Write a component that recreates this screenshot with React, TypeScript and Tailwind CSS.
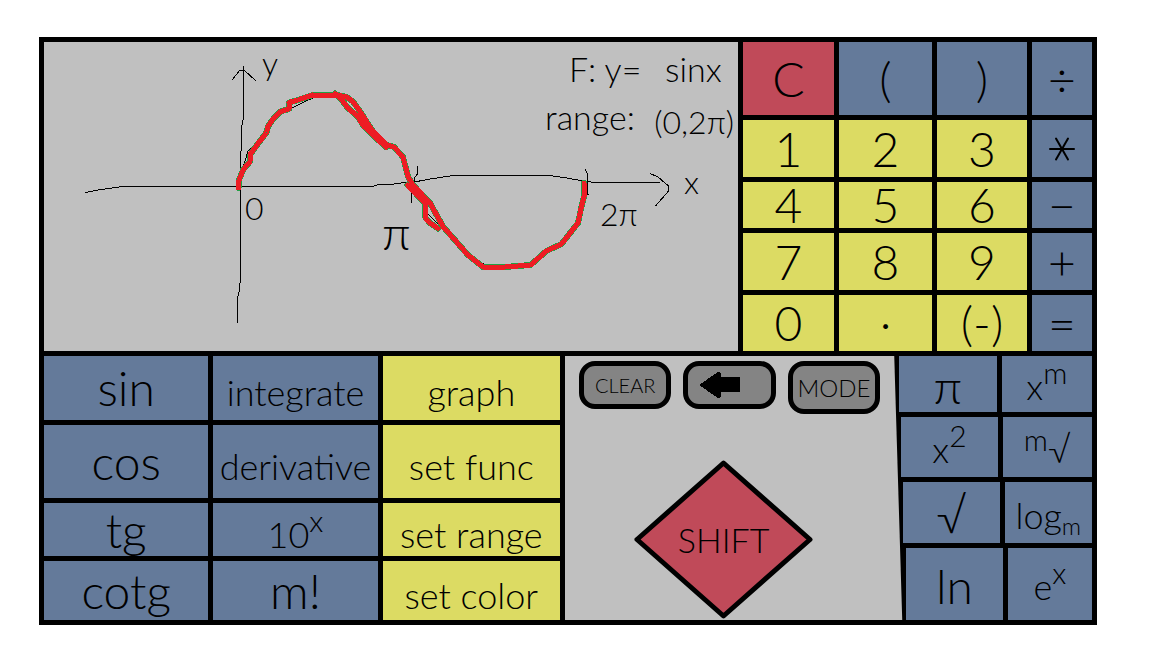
import React from "react";
import clsx from "clsx";
import { Asterisk } from "lucide-react";

type Tone = "blue" | "yellow" | "red";

const tones: Record<Tone, string> = {
  blue: "bg-[#647a9a]",
  yellow: "bg-[#dcdb63]",
  red: "bg-[#c04a59]",
};

function Key({
  tone,
  className,
  children,
}: {
  tone: Tone;
  className?: string;
  children: React.ReactNode;
}) {
  return (
    <button
      type="button"
      className={clsx(
        "flex min-h-0 min-w-0 items-center justify-center whitespace-nowrap leading-none",
        tones[tone],
        className,
      )}
    >
      <span>{children}</span>
    </button>
  );
}

const Sup = ({ children }: { children: React.ReactNode }) => (
  <sup className="-top-4 text-3xl leading-none">{children}</sup>
);

const keypad: [string, Tone][] = [
  ["C", "red"], ["(", "blue"], [")", "blue"], ["÷", "blue"],
  ["1", "yellow"], ["2", "yellow"], ["3", "yellow"], ["*", "blue"],
  ["4", "yellow"], ["5", "yellow"], ["6", "yellow"], ["−", "blue"],
  ["7", "yellow"], ["8", "yellow"], ["9", "yellow"], ["+", "blue"],
  ["0", "yellow"], ["·", "yellow"], ["(-)", "yellow"], ["=", "blue"],
];

const functions: [React.ReactNode, Tone][] = [
  ["sin", "blue"], ["integrate", "blue"], ["graph", "yellow"],
  ["cos", "blue"], ["derivative", "blue"], ["set func", "yellow"],
  ["tg", "blue"], [<>10<Sup>x</Sup></>, "blue"], ["set range", "yellow"],
  ["cotg", "blue"], ["m!", "blue"], ["set color", "yellow"],
];

const powers: { row: string; keys: React.ReactNode[] }[] = [
  { row: "pl-[5px] grid-cols-[97fr_90fr]", keys: ["π", <>x<Sup>m</Sup></>] },
  { row: "pl-[7px] grid-cols-[96fr_89fr]", keys: [<>x<Sup>2</Sup></>, <><sup className="-top-3 text-3xl leading-none">m</sup>√</>] },
  { row: "pl-[9px] grid-cols-[96fr_87fr]", keys: ["√", <>log<sub className="text-2xl leading-none">m</sub></>] },
  { row: "pl-[12px] grid-cols-[96fr_84fr]", keys: ["ln", <>e<Sup>x</Sup></>] },
];

const sine =
  "M238.5 188V181.5L243 170L250 161.5L250.5 154L257 145L266.5 132.5L268 126.5L273.5 118.5L280.5 111.5L289 109V102.5L298 100L312.5 95L340 95.5L346.5 97L353 101.5L360 111.5L366.5 121.5L373 131.5L386.5 145L394 147L403 157L408 176.5L413 185L430 203L443 226.5L468 255L483 267H505L530.5 265L546.5 251L561.5 244L578 223L581.5 206.5L584 196.5V183";
const retraced =
  "M335 93.5L341.5 99.5L347 107L358 117L364 126.5L376.5 138.5L386 147M407.5 185L425 203L425.5 218L430 223L438 228.5";

function Graph() {
  return (
    <svg
      viewBox="44 42 694 309"
      className="h-full w-full"
      role="img"
      aria-label="Graph of y = sin x"
      fill="none"
      strokeLinejoin="round"
      strokeLinecap="round"
    >
      <g stroke="#000" strokeWidth="1" shapeRendering="crispEdges">
        <path d="M243.5 66V118L241.5 127V150L240.5 152V277L239.5 290L237.5 298V323" />
        <path d="M232 80L240 70H244L256 81" />
        <path d="M86 192.5L98 190L123 186.5H373L378 184.5H390L405 182.5L417 181.5L430 179L450 176L462 175.5H550L567 178L583 181L595 182.5H660" />
        <path d="M650 173.5L658 177L668.5 186V191L656 205.5" />
        <path d="M417.5 166V174L414.5 178V187L411.5 190V203" />
        <path d="M585.5 170L587.5 174V194.5H589M581.5 185V197" />
        <path d="M243 168L248 151L257 142L270 127L280 115L292 108L308 100L318 96M366 121L374 129L379 134M426 212L440 226L444 230M472 256L485 265" />
      </g>
      <g shapeRendering="crispEdges">
        <path d={sine + retraced} stroke="#22a045" strokeWidth="6" />
        <path d={sine + retraced} stroke="#ed1c24" strokeWidth="5" />
      </g>
      <g fill="#000" fontSize="32">
        <text x="262" y="75">y</text>
        <text x="245" y="220">0</text>
        <text x="684" y="194">x</text>
        <text x="382" y="250" fontSize="48">π</text>
        <text x="600" y="226">2π</text>
      </g>
      <g fill="#000" fontSize="34">
        <text x="569" y="82">F: y=</text>
        <text x="665" y="82">sinx</text>
        <text x="545" y="130">range:</text>
        <text x="734" y="134" fontSize="32" textAnchor="end">(0,2π)</text>
      </g>
    </svg>
  );
}

const pill =
  "flex min-w-0 flex-1 items-center justify-center rounded-2xl border-[5px] border-black bg-[#848484] leading-none";

export default function App() {
  return (
    <main className="flex h-screen min-h-[648px] flex-col bg-white pt-[37px] pr-[55px] pb-[23px] pl-[39px] font-['Lato','Noto_Sans',sans-serif] font-light text-black">
      <div className="grid min-h-0 flex-1 grid-rows-[minmax(0,309fr)_minmax(0,264fr)] gap-[5px] bg-black p-[5px]">
        <div className="grid min-h-0 grid-cols-[694fr_349fr] gap-[5px]">
          <section className="min-h-0 min-w-0 bg-[#c0c0c0]">
            <Graph />
          </section>
          <section
            aria-label="Keypad"
            className="grid min-h-0 grid-cols-[91fr_93fr_90fr_60fr] grid-rows-[minmax(0,73fr)_minmax(0,57fr)_minmax(0,46fr)_minmax(0,57fr)_minmax(0,56fr)] gap-[5px] text-5xl"
          >
            {keypad.map(([k, tone]) => (
              <Key key={k} tone={tone}>
                {k === "*" ? (
                  <Asterisk role="img" aria-label="Multiply" className="size-12 rotate-90" strokeWidth={1} />
                ) : (
                  k
                )}
              </Key>
            ))}
          </section>
        </div>

        <div className="grid min-h-0 grid-cols-[514fr_333fr_197fr]">
          <section
            aria-label="Functions"
            className="grid min-h-0 grid-cols-[minmax(0,164fr)_minmax(0,164fr)_minmax(0,177fr)] grid-rows-[minmax(0,64fr)_minmax(0,73fr)_minmax(0,53fr)_minmax(0,59fr)] gap-[5px] text-4xl"
          >
            {functions.map(([k, tone], i) => (
              <Key key={i} tone={tone} className={i % 3 === 0 || k === "m!" ? "text-5xl" : "pt-2"}>
                {k}
              </Key>
            ))}
          </section>

          <section
            aria-label="Controls"
            className="flex min-h-0 min-w-0 flex-col justify-between border-l-[5px] border-black bg-[#c0c0c0] pt-[5px]"
          >
            <div className="flex items-start gap-3 px-[14px]">
              <button type="button" className={clsx(pill, "h-12 text-xl")}>CLEAR</button>
              <button type="button" aria-label="Backspace" className={clsx(pill, "h-12")}>
                <svg viewBox="0 0 41 26" className="mr-5 h-[26px] w-[41px]" shapeRendering="crispEdges">
                  <path d="M0 13L19 0L22 1V5H41V20H22V25L19 26Z" fill="#000" />
                </svg>
              </button>
              <button type="button" className={clsx(pill, "h-[53px] text-2xl")}>MODE</button>
            </div>
            <button type="button" className="mx-auto grid place-items-center pr-3 text-[34px] leading-none">
              <svg viewBox="0 0 181 161" className="col-start-1 row-start-1 h-[161px] w-[181px]">
                <path d="M90.5 4L177 80.5L90.5 157L4 80.5Z" fill="#c04a59" stroke="#000" strokeWidth="5" strokeLinejoin="round" />
              </svg>
              <span className="col-start-1 row-start-1">SHIFT</span>
            </button>
          </section>

          <section className="min-h-0 min-w-0 bg-[#c0c0c0]" aria-label="Powers and logarithms">
            <div className="grid h-full grid-rows-[minmax(0,56fr)_minmax(0,60fr)_minmax(0,61fr)_minmax(0,72fr)] gap-[5px] bg-black text-4xl [clip-path:polygon(0_0,100%_0,100%_100%,8px_100%)]">
              {powers.map(({ row, keys }, r) => (
                <div key={r} className={clsx("grid min-h-0 grid-rows-[minmax(0,1fr)] gap-[5px]", row)}>
                  {keys.map((k, i) => (
                    <Key key={i} tone="blue" className={typeof k === "string" ? "pt-1 text-5xl" : "pt-1"}>
                      {k}
                    </Key>
                  ))}
                </div>
              ))}
            </div>
          </section>
        </div>
      </div>
    </main>
  );
}
